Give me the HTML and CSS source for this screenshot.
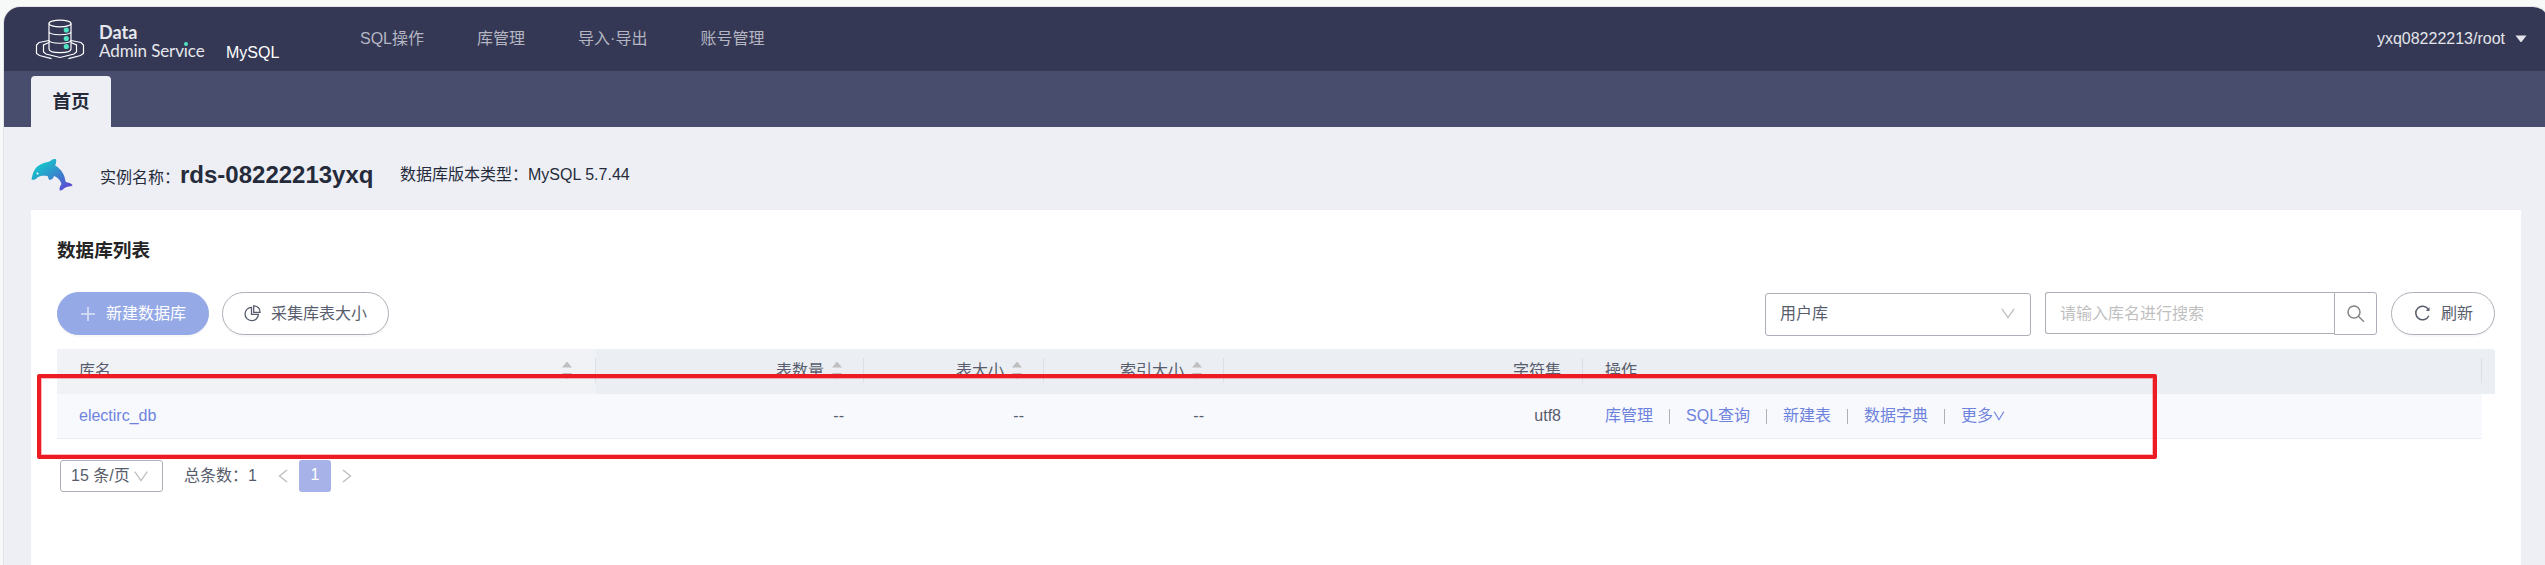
FILE: index.html
```html
<!DOCTYPE html>
<html lang="zh-CN">
<head>
<meta charset="utf-8">
<title>Data Admin Service</title>
<link rel="stylesheet" href="styles.css">
</head>
<body>
<div class="window">
  <header class="topbar">
    <svg class="logo" width="50" height="42" viewBox="0 0 50 42" fill="none" stroke="#fff" stroke-width="1.2">
      <ellipse cx="25" cy="4.500" rx="11" ry="3.300"/>
      <path d="M14 4.500v25.500c0 4.800 22 4.800 22 0V4.500M14 12.500c0 4.300 22 4.300 22 0M14 21c0 4.300 22 4.300 22 0"/>
      <path d="M14 21.500 4 23.500 1.500 26v8.500l3 2 12 3.200M36 21.500l10 2 2.500 2.500v8.500l-3 2-12 3.200"/>
      <path d="M14 23.500 8.500 26v7l2.500 2 14 3.500L39 35l2.500-2v-7L36 23.500"/>
      <g fill="#50e3c2" stroke="none"><circle cx="31.300" cy="11" r="2.600"/><circle cx="31.300" cy="19.500" r="2.600"/><circle cx="31.300" cy="27.500" r="2.600"/></g>
    </svg>
    <div class="brand">
      <div class="brand-top">Data</div>
      <div class="brand-bottom">Admin Serv<span class="brand-i">ı<i class="dot"></i></span>ce</div>
    </div>
    <span class="engine">MySQL</span>
    <nav class="nav"><span>SQL操作</span><span>库管理</span><span>导入·导出</span><span>账号管理</span></nav>
    <div class="user">yxq08222213/root<svg width="12" height="8" viewBox="0 0 12 8"><path d="M.5.500h11L6.500 7h-1z" fill="#e4e5ea"/></svg></div>
  </header>
  <div class="tabs"><div class="tab">首页</div></div>
  <section class="instance">
    <svg class="dolphin" width="42" height="34" viewBox="0 0 42 34">
      <defs><linearGradient id="sea" x1="0" y1="0" x2="1" y2="1"><stop offset=".2" stop-color="#18c0cb"/><stop offset=".55" stop-color="#3787cd"/><stop offset=".9" stop-color="#5b4bd3"/></linearGradient></defs>
      <path fill="url(#sea)" d="M.500 21.500C1.500 16 3 11 7 8c4-3 8-3.500 11.500-4.500C20 2 22.500.500 24.500 1c1.500.800.500 4.500-.300 6.500C31 11.500 34 18 34.500 23.500c2 1.500 6.500 1.300 7 4-2 1.500-5.500.500-7.500 2.300-1.500 1-3 3-5.200 2.700-.800-2.300.200-4.500 1.700-6.500C29.500 22 26.500 19.500 23 18c-.5 1.800-1.500 3.500-4.500 4-1.500-1-1-3-2-4-3.500-.500-6.500-.500-9.500 1C5.500 20.500 3.500 22.800.500 21.500z"/>
      <circle cx="6.500" cy="15.500" r="1" fill="#fff"/>
    </svg>
    <span class="label">实例名称：</span><strong class="name">rds-08222213yxq</strong>
    <span class="version">数据库版本类型：MySQL 5.7.44</span>
  </section>
  <main class="panel">
    <h2 class="title">数据库列表</h2>
    <div class="toolbar">
      <button class="btn primary"><svg width="14" height="14" viewBox="0 0 14 14" stroke="#dfe5f8" stroke-width="1.500"><path d="M7 0v14M0 7h14"/></svg>新建数据库</button>
      <button class="btn collect"><svg width="17" height="17" viewBox="0 0 17 17" fill="none" stroke="#575d6c" stroke-width="1.300"><path d="M7.500 2.300A6.700 6.700 0 1 0 14.400 9.400H7.500z"/><path d="M9.700.800v6.500h6.400C16 3.500 13.400 1 9.700.800z"/></svg>采集库表大小</button>
      <div class="spacer"></div>
      <div class="select">用户库<svg width="14" height="11" viewBox="0 0 14 11" fill="none" stroke="#bfbfbf" stroke-width="1.300"><path d="m.7.700 6.300 9 6.300-9"/></svg></div>
      <div class="search"><div class="input">请输入库名进行搜索</div><div class="search-btn"><svg width="18" height="18" viewBox="0 0 18 18" fill="none" stroke="#858585" stroke-width="1.500"><circle cx="7" cy="7" r="6"/><path d="m11.300 11.300 5.700 5.500"/></svg></div></div>
      <button class="btn refresh"><svg width="17" height="17" viewBox="0 0 17 17" fill="none" stroke="#575d6c" stroke-width="1.500"><path d="M14.200 4.200A6.800 6.800 0 1 0 14.800 10.800"/><path d="M15.500 2v4h-3.700z" fill="#575d6c" stroke="none"/></svg>刷新</button>
    </div>
    <div class="table">
      <div class="row head">
        <div class="cell first">库名<i class="sort"></i></div>
        <div class="cell num">表数量<i class="sort"></i></div>
        <div class="cell num">表大小<i class="sort"></i></div>
        <div class="cell num">索引大小<i class="sort"></i></div>
        <div class="cell num">字符集</div>
        <div class="cell ops">操作</div>
      </div>
      <div class="row data">
        <div class="cell"><a class="link">electirc_db</a></div>
        <div class="cell num">--</div>
        <div class="cell num">--</div>
        <div class="cell num">--</div>
        <div class="cell num charset">utf8</div>
        <div class="cell ops"><a class="link">库管理</a><i class="bar"></i><a class="link">SQL查询</a><i class="bar"></i><a class="link">新建表</a><i class="bar"></i><a class="link">数据字典</a><i class="bar"></i><a class="link">更多<svg width="12" height="10" viewBox="0 0 12 10" fill="none" stroke="#6e83dd" stroke-width="1.200"><path d="m1.200.700 4.800 8 4.800-8"/></svg></a></div>
      </div>
    </div>
    <div class="pager">
      <div class="size">15 条/页<svg width="14" height="11" viewBox="0 0 14 11" fill="none" stroke="#bfbfbf" stroke-width="1.300"><path d="m.7.700 6.300 9 6.300-9"/></svg></div>
      <span class="total">总条数：1</span>
      <svg class="prev" width="10" height="14" viewBox="0 0 10 14" fill="none" stroke="#bfbfbf" stroke-width="1.400"><path d="M9 1 1.500 7 9 13"/></svg>
      <span class="page">1</span>
      <svg class="next" width="10" height="14" viewBox="0 0 10 14" fill="none" stroke="#bfbfbf" stroke-width="1.400"><path d="m1 1 7.500 6L1 13"/></svg>
    </div>
  </main>
</div>
<div class="highlight"></div>
</body>
</html>
```

FILE: styles.css
```css
* { box-sizing: border-box; }
html, body { height: 100%; overflow: hidden; }
body {
  margin: 0;
  padding: 7px 0 0 4px;
  background: #f7f8f8;
  font: 16px/24px "Liberation Sans", "Noto Sans CJK SC", sans-serif;
  color: #575d6c;
}
svg { display: block; flex: none; }
.window {
  width: 2545px;
  height: 558px;
  border-radius: 16px 16px 0 0;
  background: #eeeff5;
  box-shadow: 0 0 0 1px #e3e4ea;
  overflow: hidden;
}
.topbar { display: flex; height: 64px; background: #343854; white-space: nowrap; }
.logo { margin: 12px 0 0 31px; }
.brand { width: 126px; margin: 15px 0 0 14px; font-family: Lato, sans-serif; color: #e6e7ec; }
.brand-top { font-size: 18px; font-weight: 700; line-height: 20px; }
.brand-bottom { font-size: 17px; line-height: 18px; letter-spacing: -.1px; }
.brand-i { position: relative; }
.dot { position: absolute; left: 0; top: 2px; width: 4px; height: 4px; border-radius: 50%; background: #50e3c2; }
.engine { width: 134px; margin-left: 1px; padding-top: 34px; color: #fff; }
.nav { display: flex; gap: 53px; padding-top: 20px; color: #b4b6c2; }
.user { display: flex; align-items: center; gap: 10px; height: 24px; margin: 20px 22px 0 auto; color: #e4e5ea; }
.tabs { height: 56px; padding: 5px 0 0 27px; background: #484d6d; }
.tab {
  width: 80px; height: 51px; border-radius: 4px 4px 0 0; background: #eeeff5;
  color: #252b3a; font-size: 18.600px; font-weight: 700; line-height: 51px; text-align: center;
}
.instance { display: flex; height: 83px; padding-left: 27px; white-space: nowrap; color: #252b3a; }
.dolphin { margin-top: 31px; }
.label { width: 80px; margin: 39px 0 0 27px; }
.name { width: 220px; font-size: 24px; line-height: 30px; padding-top: 33px; }
.version { padding-top: 36px; }
.panel { width: 2490px; height: 355px; margin-left: 27px; padding: 0 26px; background: #fff; }
.title { margin: 0; padding-top: 27px; font-size: 18.600px; line-height: 28px; font-weight: 700; color: #252525; }
.toolbar { display: flex; height: 43px; margin-top: 27px; }
.btn {
  display: flex; align-items: center; height: 43px; padding: 0 0 0 21px;
  border: 1px solid #adb0b8; border-radius: 22px; background: #fff;
  color: #575d6c; font: inherit; white-space: nowrap; box-shadow: 0 2px 1px rgba(0,0,0,.03);
}
.primary { width: 152px; padding-left: 23px; gap: 11px; background: #94a9e6; border-color: #94a9e6; color: #fff; }
.collect { width: 167px; margin-left: 13px; gap: 10px; }
.spacer { flex: 1; }
.select {
  display: flex; align-items: center; justify-content: space-between;
  width: 266px; height: 43px; margin-top: 1px; padding: 0 15px 2px 14px; border: 1px solid #adb0b8; border-radius: 3px;
}
.search { display: flex; margin-left: 14px; }
.input { width: 290px; height: 42px; padding-left: 14px; line-height: 41px; border: 1px solid #adb0b8; border-right: 0; border-radius: 3px 0 0 3px; color: #bfbfbf; }
.search-btn { display: grid; place-items: center; width: 43px; height: 43px; margin-left: -1px; border: 1px solid #adb0b8; border-radius: 0 3px 3px 0; }
.refresh { width: 104px; margin-left: 14px; padding-left: 22px; gap: 10px; }
.table { margin-top: 14px; }
.row { display: grid; grid-template-columns: 539px 268px 180px 180px 359px 899px; height: 45px; }
.head { border-radius: 3px 3px 0 0; background: #ebeef3; overflow: hidden; }
.data { width: 2425px; background: #f8f9fd; border-bottom: 1px solid #ebedf0; }
.cell { display: flex; align-items: center; padding: 0 22px; white-space: nowrap; }
.head .cell { position: relative; padding-bottom: 2px; }
.head .cell::after { content: ""; position: absolute; right: 0; top: 9px; width: 1px; height: 25px; background: #dcdfe5; }
.first { justify-content: space-between; padding-right: 24px; background: #f0f2f5; }
.num { justify-content: flex-end; padding-right: 22px; }
.data .num { padding-right: 20px; }
.data .charset { padding-right: 22px; }
.sort { position: relative; width: 10px; height: 17px; margin: 0 0 1px 8px; }
.sort::before, .sort::after { content: ""; position: absolute; left: 0; width: 10px; height: 6px; background: #bfbfbf; clip-path: polygon(50% 0, 100% 100%, 0 100%); }
.sort::before { top: 0; }
.sort::after { bottom: 0; transform: scaleY(-1); }
.link { display: flex; align-items: center; color: #6e83dd; }
.bar { width: 1px; height: 15px; margin: 0 16px; background: #adb0b8; }
.pager { display: flex; align-items: center; height: 32px; margin: 21px 0 0 3px; white-space: nowrap; }
.size { display: flex; align-items: center; justify-content: space-between; width: 103px; height: 32px; padding: 0 14px 0 10px; border: 1px solid #adb0b8; border-radius: 3px; }
.total { width: 94px; margin-left: 21px; }
.page { width: 32px; height: 32px; margin: 0 11px; border-radius: 3px; background: #a6b2e8; color: #fff; text-align: center; line-height: 29px; }
/* Annotation frame drawn over the table row */
.highlight { position: absolute; left: 37px; top: 374px; width: 2120px; height: 85px; border: 4px solid #ed1c24; border-radius: 2px; box-shadow: inset 0 0 0 1px rgba(237,28,36,.3); }
```
